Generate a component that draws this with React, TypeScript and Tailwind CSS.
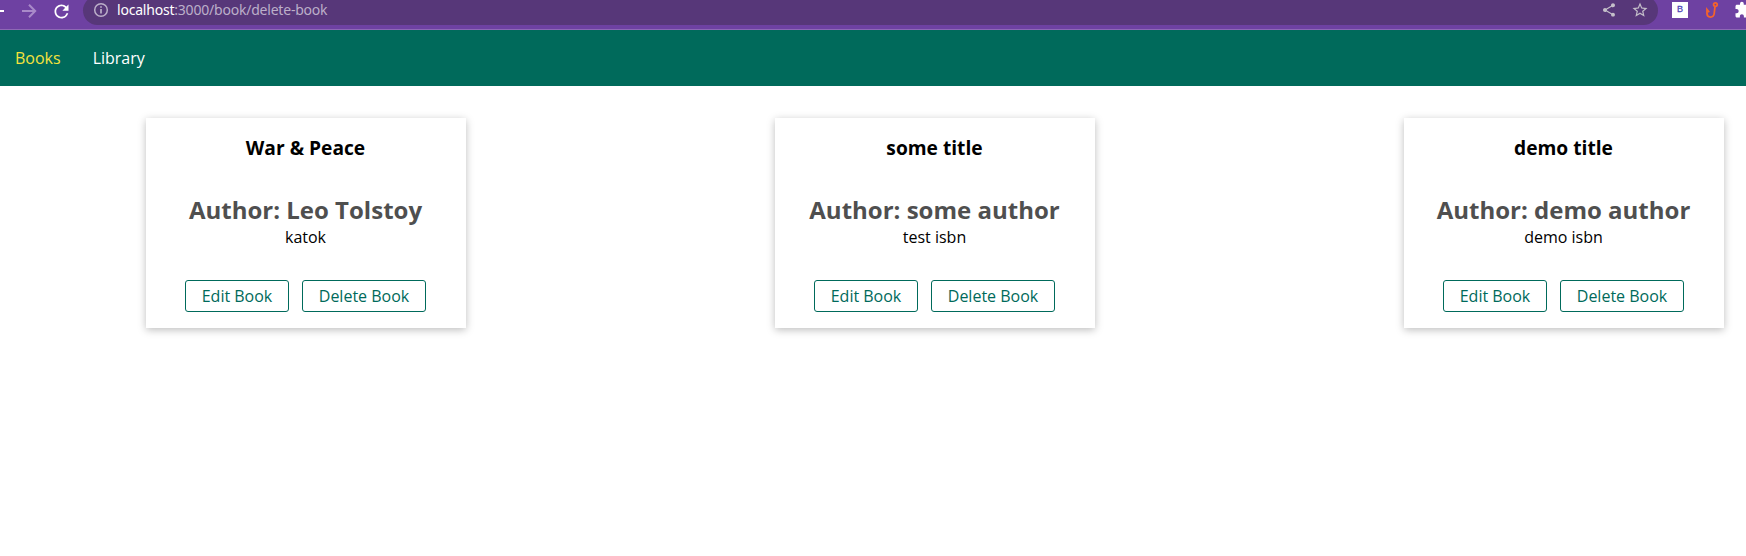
import React from "react";
import {
  MdExtension,
  MdRefresh,
  MdShare,
  MdStarBorder,
} from "react-icons/md";

type Book = { title: string; author: string; isbn: string };

const books: Book[] = [
  { title: "War & Peace", author: "Leo Tolstoy", isbn: "katok" },
  { title: "some title", author: "some author", isbn: "test isbn" },
  { title: "demo title", author: "demo author", isbn: "demo isbn" },
];

function ArrowIcon({ className }: { className: string }) {
  return (
    <svg className={className} width="20" height="20" viewBox="0 0 20 20" fill="none" stroke="currentColor" strokeWidth="2">
      <path d="M3 10H16M10 3.7L16.2 10L10 16.3" />
    </svg>
  );
}

function InfoIcon() {
  return (
    <svg width="16" height="16" viewBox="0 0 16 16" fill="none" stroke="currentColor" strokeWidth="1.5">
      <circle cx="8" cy="8" r="6.3" />
      <path d="M8 7V11.6M8 4.2V5.8" strokeWidth="1.7" />
    </svg>
  );
}

function BrowserBar() {
  return (
    <div className="h-[30px] overflow-hidden border-b border-[#8e69b5] bg-[#6e41a2]">
      <div className="-mt-1 flex h-[29px] w-[1770px] items-center">
        <div className="-ml-[13px] flex h-[28px] shrink-0 gap-3 pt-1 text-white">
          <ArrowIcon className="rotate-180" />
          <ArrowIcon className="text-[#a98ac9]" />
          <MdRefresh size={21} className="-mr-px" />
        </div>
        <div className="ml-3 flex h-[29px] w-[1575px] shrink-0 items-center rounded-full bg-[#573779] pr-[9px] pb-px pl-[10px] text-[#bcafc9]">
          <InfoIcon />
          <span className="ml-2 font-['Noto_Sans',sans-serif] text-[14px] leading-[20px] tracking-[-0.21px]">
            <span className="text-white">localhost</span>:3000/book/delete-book
          </span>
          <MdShare size={16} className="ml-auto text-[#c4bfc9]" />
          <MdStarBorder size={18} className="ml-[14px] text-[#c4bfc9]" />
        </div>
        <div className="mb-px ml-[14px] flex size-4 shrink-0 items-center justify-center bg-white font-['Liberation_Sans',sans-serif] text-[9px] text-[#4f46b8] [-webkit-text-stroke:0.3px_#4f46b8]">
          B
        </div>
        <svg className="mb-px ml-4 shrink-0" width="16" height="18" viewBox="0 0 16 18" fill="none" stroke="#f4632a" strokeWidth="1.8">
          <circle cx="11.4" cy="3.6" r="1.8" />
          <path d="M11 5.5L10.2 12.5C9.7 17.2 3.2 17.2 3 12.8V8.5L5.2 11.2" />
        </svg>
        <MdExtension size={18} className="mb-px ml-[14px] shrink-0 text-white" />
      </div>
    </div>
  );
}

function BookCard({ book }: { book: Book }) {
  return (
    <article className="flex h-[210px] w-80 flex-col items-center bg-white pt-4 pr-px shadow-[0_2px_8px_rgba(0,0,0,0.26)]">
      <h1 className="text-[19.2px] leading-[27px] font-bold text-black">{book.title}</h1>
      <h2 className="mt-8 text-2xl leading-[33px] font-bold text-[#4f4f4f]">Author: {book.author}</h2>
      <p className="text-base leading-[22px] text-black">{book.isbn}</p>
      <div className="mt-8 flex gap-[13px]">
        <button className="h-8 w-[104px] rounded-[3px] border border-[#006a5b] text-base leading-[22px] text-[#006a5b]">Edit Book</button>
        <button className="h-8 w-[124px] rounded-[3px] border border-[#006a5b] text-base leading-[22px] text-[#006a5b]">Delete Book</button>
      </div>
    </article>
  );
}

export default function App() {
  return (
    <div className="min-h-[556px] overflow-hidden bg-white font-['Open_Sans','Noto_Sans',sans-serif]">
      <BrowserBar />
      <nav className="flex h-14 items-center gap-8 bg-[#006a5b] px-[15px] text-base">
        <a className="text-[#f5e33c]">Books</a>
        <a className="text-white">Library</a>
      </nav>
      <main className="flex gap-[309px] pt-8 pl-[146px]">
        {books.map((book) => (
          <div key={book.title} className="shrink-0">
            <BookCard book={book} />
          </div>
        ))}
      </main>
    </div>
  );
}
